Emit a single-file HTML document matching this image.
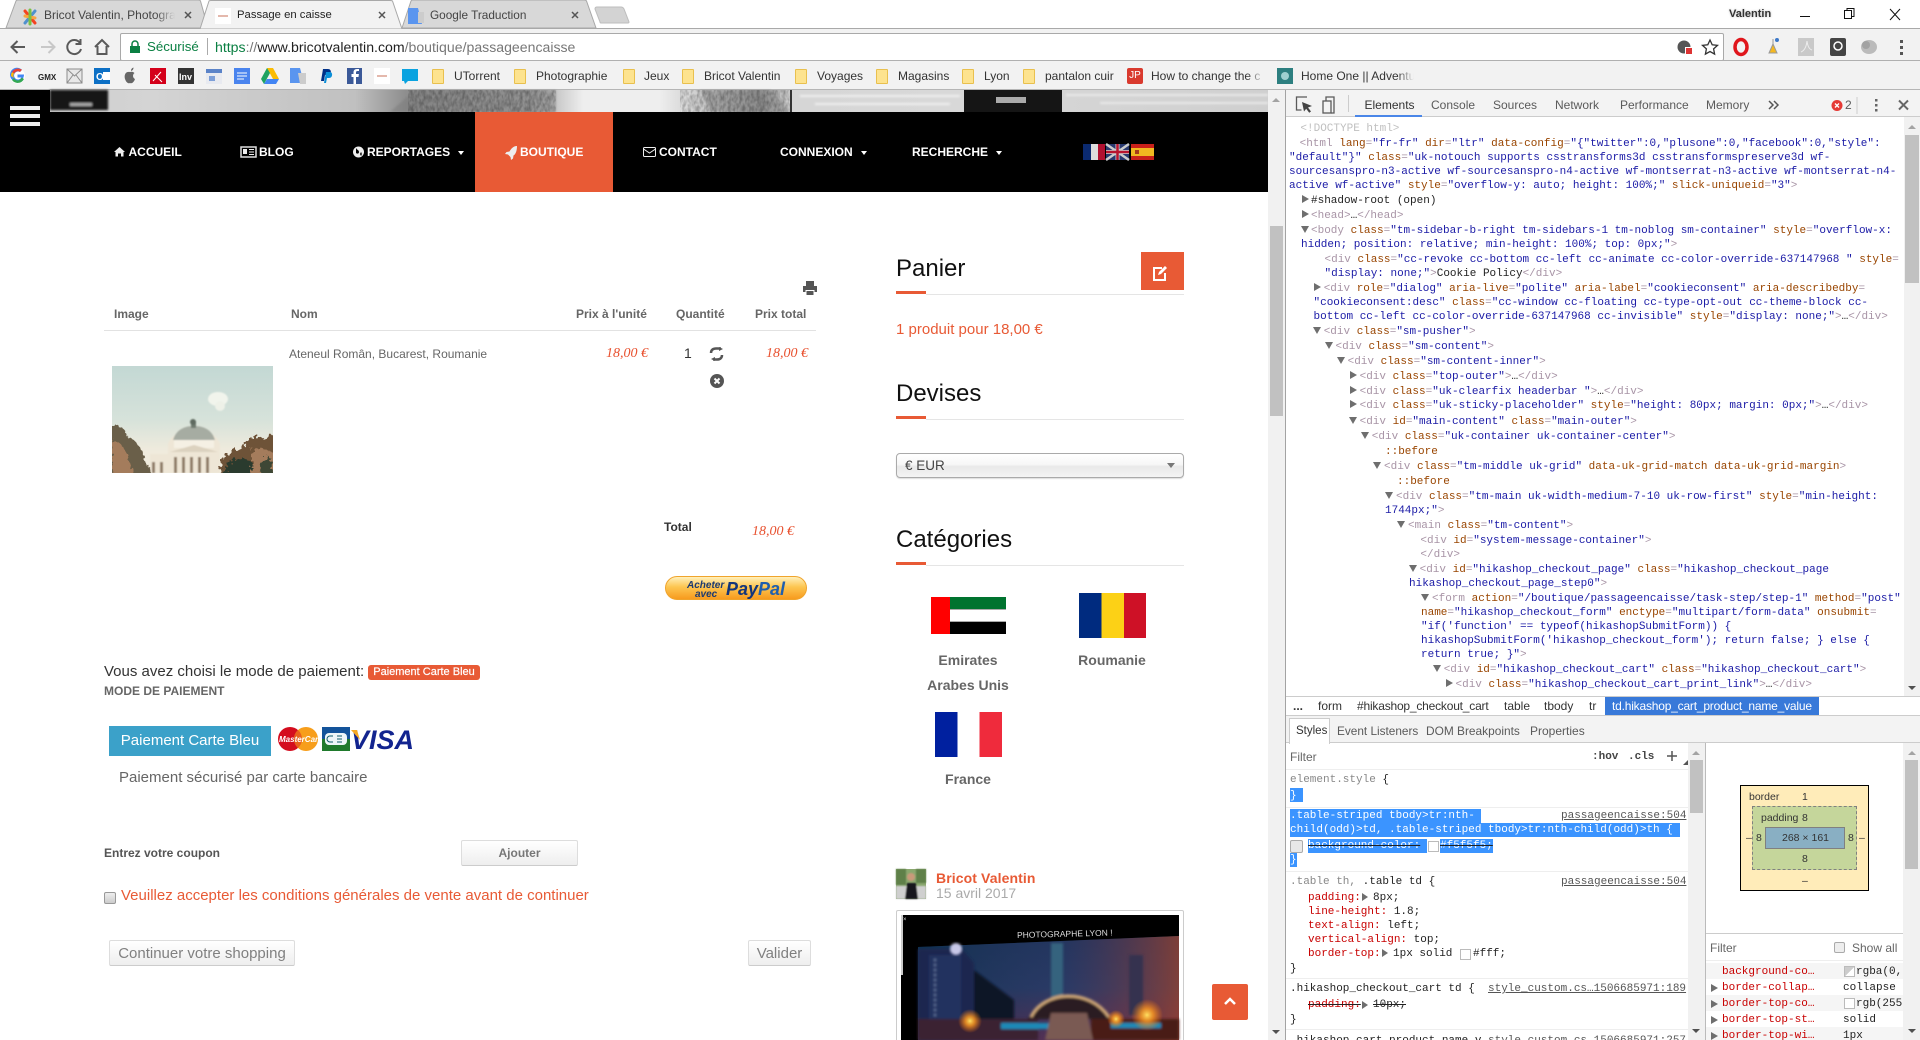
<!DOCTYPE html>
<html lang="fr"><head><meta charset="utf-8"><title>Passage en caisse</title>
<style>
html,body{margin:0;padding:0;width:1920px;height:1040px;overflow:hidden;background:#fff}
body{position:relative;font-family:"Liberation Sans",sans-serif;font-size:12px;color:#333}
.t{position:absolute;white-space:nowrap;line-height:20px}
.b{position:absolute}
svg{position:absolute;overflow:visible}
.fo{position:absolute;top:69px;width:10px;height:13px;background:#fde38f;border:1px solid #e9c04e;border-radius:1px}
.nv{font-weight:bold;color:#fff;font-size:12px;top:142px}
.bm{top:66px;font-size:12px;color:#333}
.car{position:absolute;top:151px;width:0;height:0;border-left:3.5px solid transparent;border-right:3.5px solid transparent;border-top:4px solid #fff}
.h3{font-size:24px;color:#111}
.ul{position:absolute;left:896px;width:30px;height:3px;background:#e85a35}
.gl{position:absolute;left:926px;width:258px;height:1px;background:#e5e5e5}
.th{font-weight:bold;color:#666;font-size:12px;top:304px}
.pr{font-family:"Liberation Serif",serif;font-style:italic;font-size:14px;color:#e8502e}
.btn{position:absolute;box-sizing:border-box;border:1px solid #ddd;border-bottom-color:#ccc;border-radius:2px;background:linear-gradient(#fff,#eee);text-align:center;line-height:24px}
.d{position:absolute;white-space:nowrap;font-family:"Liberation Mono",monospace;font-size:11px;line-height:14px;color:#222;margin-top:1px}
.d i{font-style:normal;color:#a894a6}.d b{font-weight:normal;color:#994500}.d u{text-decoration:none;color:#1a1aa6}
.ar{position:absolute;width:0;height:0;border-top:4.5px solid transparent;border-bottom:4.5px solid transparent;border-left:7px solid #6e6e6e}
.ad{position:absolute;width:0;height:0;border-left:4.5px solid transparent;border-right:4.5px solid transparent;border-top:7px solid #6e6e6e}
.dv{font-size:12px;color:#5a5a5a;top:95px}
.r{color:#c80000}.l{text-decoration:underline;color:#555}
.sw{position:absolute;width:9px;height:9px;border:1px solid #bbb;background:#fff}
.ln{position:absolute;height:1px;background:#eee}
.bx{font-size:10.500px;color:#333}
.sb{position:absolute;background:#f1f1f1}
.tu{position:absolute;width:0;height:0;border-left:4px solid transparent;border-right:4px solid transparent;border-bottom:4px solid #a3a3a3}
.td{position:absolute;width:0;height:0;border-left:4px solid transparent;border-right:4px solid transparent;border-top:4px solid #505050}
</style></head><body>

<!-- ===== browser chrome ===== -->
<div class="b" style="left:0;top:0;width:1920px;height:29px;background:#fff"></div>
<div class="b" style="left:0;top:28px;width:1920px;height:1px;background:#a9a9a9"></div>
<svg style="left:0;top:0" width="640" height="30">
<path d="M6 28 L16 1 Q16.500 0 18 0 L198 0 Q200 0 200.500 1 L208 28Z" fill="#d8d8d8" stroke="#a8a8a8"/>
<path d="M402 28 L411 1 Q411.500 0 413 0 L584 0 Q586 0 586.500 1 L596 28Z" fill="#d8d8d8" stroke="#a8a8a8"/>
<path d="M200 29 L209 1 Q209.500 0.500 211 0.500 L390 0.500 Q392 0.500 392.500 1 L402 29Z" fill="#f2f2f2" stroke="#a8a8a8"/>
<path d="M595 9 Q595 7 597 7 L621 7 Q623 7 624 9 L629 22 Q629 23 628 23 L601 23 Q600 23 600 22Z" fill="#d3d3d3" stroke="#bdbdbd"/>
<g stroke-width="3" fill="none" stroke-linecap="round"><path d="M25 11 L35 23" stroke="#f44321"/><path d="M35 11 L25 23" stroke="#5091cd"/><path d="M25 16 L35 18" stroke="#f9a541"/><path d="M30 10 L30 24" stroke="#7ac143"/></g>
<rect x="215" y="8" width="16" height="16" fill="#fff"/><path d="M218 16h10" stroke="#c9705a"/>
<path d="M408 8 h10 l4 16 h-14z" fill="#5a95ef"/><path d="M418 12 h6 v11 h-6z" fill="#ccc"/>
<g stroke="#555" stroke-width="1.500"><path d="M185 12 l6 6 M191 12 l-6 6"/><path d="M379 12 l6 6 M385 12 l-6 6"/><path d="M572 12 l6 6 M578 12 l-6 6"/></g>
</svg>
<div class="t" style="left:44px;top:5px;width:131px;overflow:hidden;color:#444;-webkit-mask-image:linear-gradient(90deg,#000 85%,transparent)">Bricot Valentin, Photogra</div>
<div class="t" style="left:237px;top:5px;color:#222;font-size:11.300px">Passage en caisse</div>
<div class="t" style="left:430px;top:5px;color:#444;font-size:11.800px">Google Traduction</div>
<div class="t" style="left:1729px;top:4px;font-size:11px;font-weight:bold;color:#333;text-shadow:0 0 2px #bbb">Valentin</div>
<svg style="left:1795px;top:4px" width="115" height="20" fill="none" stroke="#111"><path d="M5 12.500h10"/><rect x="49.500" y="6.500" width="7" height="8" fill="#fff"/><path d="M52 6.500V4.500h7v8h-2.500"/><path d="M95 5 L105 16 M105 5 L95 16"/></svg>
<!-- toolbar -->
<div class="b" style="left:0;top:29px;width:1920px;height:32px;background:#f2f2f2"></div>
<div class="b" style="left:120px;top:33px;width:1602px;height:26px;border:1px solid #a9a9a9;border-radius:2px;background:#fff"></div>
<svg style="left:0;top:29px" width="130" height="32" fill="none" stroke-width="2">
<path d="M25 18H12 M17.500 12L11.500 18L17.500 24" stroke="#5a5a5a"/>
<path d="M41 18H54 M48.500 12L54.500 18L48.500 24" stroke="#c8c8c8"/>
<path d="M80 14A7 7 0 1 0 81 20 M80.500 10v5h-5" stroke="#5a5a5a"/>
<path d="M95 18l7-7 7 7M97.500 17v8h9v-8" stroke="#5a5a5a"/>
</svg>
<svg style="left:129px;top:40px" width="12" height="14"><path d="M3 6V4a3 3 0 0 1 6 0v2" fill="none" stroke="#0b8043" stroke-width="1.500"/><rect x="1" y="6" width="10" height="7" fill="#0b8043"/></svg>
<div class="t" style="left:147px;top:37px;font-size:13.300px;color:#0b8043">Sécurisé</div>
<div class="b" style="left:207px;top:38px;width:1px;height:17px;background:#aaa"></div>
<div class="t" style="left:215px;top:37px;font-size:14.100px;color:#777"><span style="color:#0b8043">https</span>://<span style="color:#222">www.bricotvalentin.com</span>/boutique/passageencaisse</div>
<svg style="left:1675px;top:36px" width="235" height="24">
<circle cx="9" cy="11" r="6.500" fill="#555"/><rect x="10" y="11" width="8" height="8" fill="#fff"/><rect x="11" y="12" width="6" height="6" fill="#d33"/>
<path d="M35 4l2.200 4.800 5.300.6-3.900 3.500 1 5.200-4.600-2.600-4.600 2.600 1-5.200-3.900-3.500 5.300-.6z" fill="none" stroke="#333" stroke-width="1.300"/>
<ellipse cx="66" cy="11" rx="6" ry="7.500" fill="none" stroke="#e0161c" stroke-width="3.500"/>
<path d="M98 3 v5 l-4 9 h8 l-4-9" fill="#f5b81f" stroke="#999"/><circle cx="102" cy="4" r="2" fill="#3c78c8"/>
<rect x="123" y="2" width="16" height="18" fill="#c9c9c9"/><path d="M126 16 q5-2 6-11 q1 8 5 9" stroke="#eee" fill="none"/>
<rect x="155" y="2" width="16" height="18" rx="2" fill="#444"/><circle cx="163" cy="10" r="4" fill="none" stroke="#fff" stroke-width="1.500"/>
<ellipse cx="194" cy="11" rx="8" ry="7" fill="#bbb"/><circle cx="191" cy="9" r="4" fill="#a2a2a2"/>
<g fill="#555"><rect x="225" y="4" width="3" height="3"/><rect x="225" y="10" width="3" height="3"/><rect x="225" y="16" width="3" height="3"/></g>
</svg>
<!-- bookmarks -->
<div class="b" style="left:0;top:60px;width:1920px;height:1px;background:#b0b0b0"></div>
<div class="b" style="left:0;top:61px;width:1920px;height:29px;background:#f2f2f2"></div>
<div class="b" style="left:0;top:89px;width:1920px;height:1px;background:#b5b5b5"></div>
<svg style="left:0;top:66px" width="420" height="20">
<circle cx="17.500" cy="10" r="7.500" fill="#fff"/><path d="M24 8.500H17.500v3H21.500A4 4 0 1 1 20 6L22 3.800A7 7 0 1 0 24 8.500Z" fill="#4285f4"/><path d="M12 6A7 7 0 0 1 22 3.800L20 6A4 4 0 0 0 14 7.800Z" fill="#ea4335"/><path d="M11 10A7 7 0 0 1 12 6L14 7.800A4 4 0 0 0 14 12Z" fill="#fbbc05"/><path d="M12 14L14 12A4 4 0 0 0 21.500 11.500L24 13A7 7 0 0 1 12 14Z" fill="#34a853"/>
<text x="38" y="14" font-family="Liberation Sans" font-size="8" font-weight="bold" fill="#222">GMX</text>
<rect x="67" y="3" width="15" height="14" fill="#e8e8e8" stroke="#8c8c8c"/><path d="M67 3l7.500 7L82 3M67 17l6-8M82 17l-6-8" stroke="#8c8c8c" fill="none"/>
<rect x="94" y="2" width="16" height="16" fill="#0d70c5"/><rect x="103" y="6" width="7" height="8" fill="#fff"/><text x="96" y="14" font-family="Liberation Sans" font-size="10" font-weight="bold" fill="#fff">O</text>
<path d="M130 6c-5-1-6 4-5 7 1 3 3 5 5 4 2 1 4-1 5-4-2-1-3-4-.5-6-1.500-1.500-3-1.500-4.500-1zM131 5c0-2 1-3 2.500-3.500 0 2-1 3-2.500 3.500z" fill="#666"/>
<rect x="150" y="2" width="16" height="16" fill="#d4001a"/><path d="M153 15l8-9M155 9l7 7" stroke="#fff" fill="none"/>
<rect x="178" y="2" width="16" height="16" fill="#333"/><text x="179" y="14" font-family="Liberation Sans" font-size="9" font-weight="bold" fill="#fff">Inv</text>
<rect x="206" y="3" width="16" height="15" fill="#e8eaf0"/><rect x="206" y="3" width="16" height="4" fill="#5b83c8"/><rect x="209" y="10" width="6" height="5" fill="#7d9fd8"/>
<path d="M234 2h16v16h-16z" fill="#4a84ee"/><path d="M237 7h10M237 10h10M237 13h7" stroke="#fff"/>
<path d="M267 2h6l6 11h-6z" fill="#fbbc05"/><path d="M267 2l-6 11 3 5 6-11z" fill="#1ea362"/><path d="M264 18h12l3-5h-12z" fill="#4285f4"/>
<path d="M290 2h10l4 15h-14z" fill="#5a95ef"/><path d="M298 7h8v11h-6z" fill="#ccc"/>
<path d="M323 3h5c4 0 4 6-1 6h-2l-1 6h-3z" fill="#003087"/><path d="M326 6h4c3 0 3 6-1 6h-2l-1 5h-2z" fill="#0a8fd8"/>
<rect x="347" y="2" width="15" height="16" fill="#3b5998"/><path d="M356 18v-7h2.500l.4-3H356V6.500c0-1 .5-1.500 1.500-1.500h1.500V3h-2c-2.500 0-3.500 1.500-3.500 3.500V8h-2v3h2v7z" fill="#fff"/>
<rect x="374" y="2" width="16" height="16" fill="#fff"/><path d="M377 10h10" stroke="#c9705a"/>
<path d="M402 3h16v12H408l-3 3-1-3h-2z" fill="#0aa3e0"/>
</svg>
<div class="fo" style="left:432px"></div><div class="t bm" style="left:454px">UTorrent</div>
<div class="fo" style="left:514px"></div><div class="t bm" style="left:536px">Photographie</div>
<div class="fo" style="left:623px"></div><div class="t bm" style="left:644px">Jeux</div>
<div class="fo" style="left:682px"></div><div class="t bm" style="left:704px">Bricot Valentin</div>
<div class="fo" style="left:795px"></div><div class="t bm" style="left:817px">Voyages</div>
<div class="fo" style="left:876px"></div><div class="t bm" style="left:898px">Magasins</div>
<div class="fo" style="left:962px"></div><div class="t bm" style="left:984px">Lyon</div>
<div class="fo" style="left:1023px"></div><div class="t bm" style="left:1045px">pantalon cuir</div>
<div class="b" style="left:1127px;top:68px;width:16px;height:16px;background:#d93a2e;border-radius:2px;color:#fff;font-size:10px;line-height:16px;text-align:center">JP</div>
<div class="t bm" style="left:1151px;width:113px;overflow:hidden;-webkit-mask-image:linear-gradient(90deg,#000 85%,transparent)">How to change the c</div>
<div class="b" style="left:1277px;top:68px;width:16px;height:16px;background:#2d7f80"></div><div class="b" style="left:1281px;top:72px;width:8px;height:8px;border-radius:50%;background:#9fd0d0"></div>
<div class="t bm" style="left:1301px;width:113px;overflow:hidden;-webkit-mask-image:linear-gradient(90deg,#000 85%,transparent)">Home One || Adventu</div>

<!-- ===== page ===== -->
<svg style="left:0;top:90px" width="1268" height="22">
<defs><linearGradient id="hg" gradientUnits="userSpaceOnUse" x1="0" x2="1268" y1="0" y2="0"><stop offset="0" stop-color="#ccc"/><stop offset=".12" stop-color="#d4d4d4"/><stop offset=".28" stop-color="#c0c0c0"/><stop offset=".32" stop-color="#8e8e8e"/><stop offset=".42" stop-color="#a8a8a8"/><stop offset=".46" stop-color="#eee"/><stop offset=".52" stop-color="#eee"/><stop offset=".6" stop-color="#999"/><stop offset=".625" stop-color="#d6d6d6"/><stop offset=".76" stop-color="#d8d8d8"/><stop offset="1" stop-color="#cfcfcf"/></linearGradient>
<filter id="bl"><feGaussianBlur stdDeviation="1"/></filter>
<filter id="ns" x="0" y="0" width="1" height="1"><feTurbulence type="fractalNoise" baseFrequency=".35 .18" numOctaves="2" seed="4"/><feColorMatrix values="0 0 0 0 0 0 0 0 0 0 0 0 0 0 0 1.800 0 0 0 -.55"/></filter></defs>
<rect width="1268" height="22" fill="url(#hg)"/>
<g filter="url(#bl)">
<path d="M50 0H108V20H50Z" fill="#191919"/><path d="M70 13h22v3H70z" fill="#aaa"/>
<path d="M390 22 L408 6 L420 0 H556 V22Z" fill="#767676" opacity=".45"/>
<path d="M700 0 L770 0 L790 22 L710 22Z" fill="#777" opacity=".4"/>
<path d="M1066 5H1268M1100 13H1268" stroke="#eaeaea" stroke-width="2"/>
<path d="M800 6H960M815 14H950" stroke="#f0f0f0" stroke-width="2"/>
</g>
<rect x="408" y="0" width="148" height="22" filter="url(#ns)" opacity=".3"/>
<rect x="680" y="0" width="110" height="22" filter="url(#ns)" opacity=".3"/>
<rect x="790" y="0" width="2" height="22" fill="#333"/>
<rect x="964" y="0" width="98" height="22" fill="#151515"/><rect x="996" y="7" width="30" height="6" fill="#aaa"/>
</svg>
<div class="b" style="left:0;top:90px;width:50px;height:22px;background:#000"></div>
<div class="b" style="left:0;top:112px;width:1268px;height:80px;background:#000"></div>
<div class="b" style="left:10px;top:106px;width:30px;height:4px;background:#eee"></div>
<div class="b" style="left:10px;top:114px;width:30px;height:4px;background:#eee"></div>
<div class="b" style="left:10px;top:122px;width:30px;height:4px;background:#eee"></div>
<div class="b" style="left:475px;top:112px;width:138px;height:80px;background:#e85a35"></div>
<svg style="left:0;top:142px" width="1268" height="20" fill="#eee">
<path d="M114 10l5.500-5 5.500 5h-1.500v4.500h-2.500v-3h-3v3h-2.500V10z"/>
<path d="M241 5h15v10h-15z" fill="none" stroke="#ddd" stroke-width="1.500"/><path d="M243 7h4v5h-4zM249 7h5v1h-5zM249 9.500h5v1h-5zM249 12h5v1h-5z"/>
<circle cx="358.500" cy="10" r="5.500"/><path d="M356 6c1 2 3 2 3 4s-2 2-3 1zM361 10c1 1 1 3 0 4l-1-2z" fill="#000"/>
<path d="M517 4c-4 0-6 3-7.500 5.500L506.500 10l-1.500 2 3 .5 2.500 2.500.5 3 2-1.500.5-3C516 12 517 8 517 4z"/>
<rect x="643.500" y="5.500" width="12" height="9" rx="1" fill="none" stroke="#eee"/><path d="M643.500 7l6 4 6-4" fill="none" stroke="#eee"/>
</svg>
<div class="t nv" style="left:128.500px">ACCUEIL</div>
<div class="t nv" style="left:259px">BLOG</div>
<div class="t nv" style="left:367px">REPORTAGES</div><div class="car" style="left:458px"></div>
<div class="t nv" style="left:520px">BOUTIQUE</div>
<div class="t nv" style="left:659px">CONTACT</div>
<div class="t nv" style="left:780px">CONNEXION</div><div class="car" style="left:861px"></div>
<div class="t nv" style="left:912px">RECHERCHE</div><div class="car" style="left:996px"></div>
<svg style="left:1083px;top:144px" width="71" height="17">
<rect x="0" width="8" height="16" fill="#0b2a70"/><rect x="8" width="7" height="16" fill="#ddd"/><rect x="15" width="7" height="16" fill="#b01030"/>
<rect x="23" width="23" height="16" fill="#28386e"/><path d="M23 0l23 16M46 0L23 16" stroke="#ccc" stroke-width="2.500"/><path d="M34.500 0v16M23 8h23" stroke="#ccc" stroke-width="4"/><path d="M34.500 0v16M23 8h23" stroke="#b8142e" stroke-width="2.500"/>
<rect x="48" width="23" height="16" fill="#c8201a"/><rect x="48" y="4" width="23" height="8" fill="#f0b820"/><rect x="52" y="6" width="4" height="4" fill="#a53a1a"/>
</svg>

<!-- cart -->
<svg style="left:803px;top:281px" width="14" height="14" fill="#555"><path d="M3 0h8v5H3z"/><path d="M0 5h14v6h-2.500V9h-9v2H0z"/><path d="M3.500 10h7v4h-7z"/></svg>
<div class="t th" style="left:114px">Image</div>
<div class="t th" style="left:291px">Nom</div>
<div class="t th" style="left:576px">Prix à l'unité</div>
<div class="t th" style="left:676px">Quantité</div>
<div class="t th" style="left:755px">Prix total</div>
<div class="b" style="left:104px;top:330px;width:712px;height:1px;background:#e2e2e2"></div>
<div class="t" style="left:289px;top:344px;color:#666">Ateneul Român, Bucarest, Roumanie</div>
<div class="t pr" style="left:606px;top:344px">18,00 €</div>
<div class="t" style="left:684px;top:343px;font-size:14px;color:#333">1</div>
<svg style="left:710px;top:347px" width="14" height="14" fill="none" stroke="#555" stroke-width="2.500"><path d="M1 6C1 3 3 1.500 6 1.500h5M12 8c0 3-2 4.500-5 4.500H3"/><path d="M9 0l4 2-4 2zM5 10L1 12l4 2z" fill="#555" stroke="none"/></svg>
<svg style="left:710px;top:374px" width="14" height="14"><circle cx="7" cy="7" r="7" fill="#555"/><path d="M4.500 4.500l5 5M9.500 4.500l-5 5" stroke="#fff" stroke-width="2"/></svg>
<div class="t pr" style="left:766px;top:344px">18,00 €</div>
<svg style="left:112px;top:366px" width="161" height="107">
<defs><linearGradient id="sky" x1="0" x2="0" y1="0" y2="1"><stop offset="0" stop-color="#c3d8d4"/><stop offset=".5" stop-color="#d6e2da"/><stop offset=".8" stop-color="#f0ebdd"/></linearGradient><filter id="b1"><feGaussianBlur stdDeviation=".8"/></filter>
<filter id="tree" x="-10%" y="-10%" width="120%" height="120%"><feTurbulence type="fractalNoise" baseFrequency=".25" numOctaves="2" seed="7" result="n"/><feDisplacementMap in="SourceGraphic" in2="n" scale="9"/></filter>
<clipPath id="c1"><rect width="161" height="107"/></clipPath></defs>
<g clip-path="url(#c1)"><rect width="161" height="107" fill="url(#sky)"/>
<g filter="url(#b1)">
<ellipse cx="106" cy="33" rx="10" ry="7" fill="#f1f4ec"/><ellipse cx="108" cy="40" rx="5" ry="5" fill="#eef1e8"/>
<path d="M38 107V88H56V78C60 68 70 64 82 64S104 68 108 78V107Z" fill="#eee6d6"/>
<path d="M61 74C64 64 72 60 82 60S100 64 103 74Z" fill="#a6aca2"/>
<rect x="79" y="55" width="5" height="7" fill="#6f7a70"/><circle cx="81" cy="56" r="3" fill="#5f6a60"/>
<path d="M62 74h40v8H62z" fill="#f5f0e4"/>
<path d="M58 86 L82 79 L106 86Z" fill="#dcd2bf"/>
<g fill="#8f7c68"><rect x="62" y="91" width="3" height="16"/><rect x="70" y="91" width="3" height="16"/><rect x="78" y="91" width="3" height="16"/><rect x="86" y="91" width="3" height="16"/><rect x="94" y="91" width="3" height="16"/><rect x="40" y="96" width="3" height="11"/><rect x="48" y="96" width="3" height="11"/></g>
</g>
<g filter="url(#tree)">
<path d="M-5 60C6 56 14 62 16 72 24 72 30 84 34 96L42 112H-5Z" fill="#6b5f48"/>
<path d="M0 76C8 72 16 84 22 112H0Z" fill="#a47c5c"/>
<path d="M108 112C106 92 118 82 128 84 134 72 146 66 152 74 156 70 166 68 166 68V112Z" fill="#6e5238"/>
<path d="M110 112C114 96 126 88 138 94L146 112Z" fill="#2c3a2e"/>
<path d="M140 84c6-4 14 0 26 4v24h-26z" fill="#a47c5c"/>
<path d="M148 96l10-6 4 22h-12z" fill="#3c4634"/>
</g></g></svg>
<div class="t" style="left:664px;top:517px;font-weight:bold;color:#333">Total</div>
<div class="t pr" style="left:752px;top:522px">18,00 €</div>
<svg style="left:665px;top:576px" width="142" height="24">
<defs><linearGradient id="pp" x1="0" x2="0" y1="0" y2="1"><stop offset="0" stop-color="#fff2c0"/><stop offset=".45" stop-color="#fdc651"/><stop offset="1" stop-color="#f7991c"/></linearGradient></defs>
<rect x=".5" y=".5" width="141" height="23" rx="11.500" fill="url(#pp)" stroke="#f0a42c"/>
<text x="22" y="12" font-family="Liberation Sans" font-style="italic" font-weight="bold" font-size="10" fill="#1c3a70">Acheter</text>
<text x="30" y="21" font-family="Liberation Sans" font-style="italic" font-weight="bold" font-size="10" fill="#1c3a70">avec</text>
<text x="61" y="19" font-family="Liberation Sans" font-style="italic" font-weight="bold" font-size="18" fill="#12357b">Pay<tspan fill="#1f5fae">Pal</tspan></text>
</svg>

<!-- payment -->
<div class="t" style="left:104px;top:662px;font-size:15px;color:#333">Vous avez choisi le mode de paiement:</div>
<div class="b" style="left:368px;top:665px;width:112px;height:15px;border-radius:3px;background:#e85a35;color:#fff;font-size:11px;font-weight:normal;line-height:15px;text-align:center;-webkit-text-stroke:.2px #fff">Paiement Carte Bleu</div>
<div class="t" style="left:104px;top:681px;font-weight:bold;color:#666">MODE DE PAIEMENT</div>
<div class="b" style="left:109px;top:726px;width:162px;height:30px;background:#3ba1c9;color:#fff;font-size:15px;line-height:30px;text-align:center">Paiement Carte Bleu</div>
<svg style="left:278px;top:727px" width="136" height="24">
<circle cx="12" cy="12" r="12" fill="#d40c1e"/><circle cx="28" cy="12" r="12" fill="#f79e1b"/><path d="M20 3a12 12 0 0 1 0 18 12 12 0 0 1 0-18z" fill="#e8611c"/>
<text x="1" y="15" font-family="Liberation Sans" font-style="italic" font-weight="bold" font-size="8" fill="#fff">MasterCard</text>
<rect x="44" width="28" height="12" fill="#13539a"/><rect x="44" y="12" width="28" height="12" fill="#1f7a2c"/>
<rect x="47" y="6" width="22" height="12" rx="4" fill="#eef6f8"/><path d="M55 9h-3a3 3 0 0 0 0 6h3M59 9h5M59 12h5M59 15h5" stroke="#0f5a6a" fill="none"/>
<text x="73" y="22" font-family="Liberation Sans" font-style="italic" font-weight="bold" font-size="27" fill="#12248f" textLength="63" lengthAdjust="spacingAndGlyphs">VISA</text>
<path d="M73 3l6 0 3 10z" fill="#f7a823"/>
</svg>
<div class="t" style="left:119px;top:768px;font-size:15px;color:#666">Paiement sécurisé par carte bancaire</div>
<div class="t" style="left:104px;top:843px;font-weight:bold;color:#555">Entrez votre coupon</div>
<div class="btn" style="left:461px;top:840px;width:117px;height:26px;font-weight:bold;color:#777">Ajouter</div>
<div class="b" style="left:104px;top:892px;width:10px;height:10px;border:1px solid #999;border-radius:2px;background:linear-gradient(#eee,#ccc)"></div>
<div class="t" style="left:121px;top:886px;font-size:15px;color:#e85a35">Veuillez accepter les conditions générales de vente avant de continuer</div>
<div class="btn" style="left:109px;top:940px;width:186px;height:26px;font-size:15px;color:#808080;line-height:26px">Continuer votre shopping</div>
<div class="btn" style="left:748px;top:940px;width:63px;height:26px;font-size:15px;color:#808080;line-height:26px">Valider</div>

<!-- sidebar -->
<div class="t h3" style="left:896px;top:259px">Panier</div>
<div class="b" style="left:1141px;top:252px;width:43px;height:38px;background:#e85a35"></div>
<svg style="left:1152px;top:265px" width="17" height="16" fill="none" stroke="#fff" stroke-width="2"><path d="M10 3H2v12h11V8"/><path d="M6 10l1-3 6-6 2 2-6 6z" fill="#fff" stroke="none"/></svg>
<div class="ul" style="top:291px"></div><div class="gl" style="top:294px"></div>
<div class="t" style="left:896px;top:320px;font-size:15px;color:#e85a35">1 produit pour 18,00 €</div>
<div class="t h3" style="left:896px;top:384px">Devises</div>
<div class="ul" style="top:416px"></div><div class="gl" style="top:419px"></div>
<div class="b" style="left:896px;top:453px;width:286px;height:23px;border:1px solid #aaa;border-radius:4px;box-shadow:0 1px 1px #ddd;background:linear-gradient(#fff 0,#f7f7f7 45%,#e9e9e9 55%,#f4f4f4 100%)"></div>
<div class="t" style="left:905px;top:456px;font-size:13.500px;color:#444">€ EUR</div>
<div class="b" style="left:1167px;top:463px;border-left:4px solid transparent;border-right:4px solid transparent;border-top:5px solid #777"></div>
<div class="t h3" style="left:896px;top:530px">Catégories</div>
<div class="ul" style="top:562px"></div><div class="gl" style="top:565px"></div>
<svg style="left:931px;top:593px" width="215" height="45">
<rect x="0" y="4" width="19" height="37" fill="#ff0000"/><rect x="19" y="4" width="56" height="12" fill="#00732f"/><rect x="19" y="16" width="56" height="13" fill="#fff"/><rect x="19" y="29" width="56" height="12" fill="#000"/><path d="M19 16.500h56M19 28.500h56" stroke="#aaa"/>
<rect x="148" width="22.500" height="45" fill="#002b7f"/><rect x="170.500" width="22.500" height="45" fill="#fcd116"/><rect x="193" width="22" height="45" fill="#ce1126"/>
</svg>
<div class="t" style="left:868px;top:650px;width:200px;text-align:center;font-size:14px;font-weight:bold;color:#666">Emirates</div>
<div class="t" style="left:868px;top:675px;width:200px;text-align:center;font-size:14px;font-weight:bold;color:#666">Arabes Unis</div>
<div class="t" style="left:1012px;top:650px;width:200px;text-align:center;font-size:14px;font-weight:bold;color:#666">Roumanie</div>
<svg style="left:935px;top:712px" width="67" height="45"><rect width="22.500" height="45" fill="#00209f"/><rect x="22.500" width="22" height="45" fill="#fff"/><rect x="44.500" width="22.500" height="45" fill="#ef2b3c"/></svg>
<div class="t" style="left:868px;top:769px;width:200px;text-align:center;font-size:14px;font-weight:bold;color:#666">France</div>
<svg style="left:896px;top:869px" width="30" height="30">
<defs><filter id="b2"><feGaussianBlur stdDeviation=".8"/></filter></defs>
<rect width="30" height="30" fill="#8aa76e"/><g filter="url(#b2)"><rect y="17" width="30" height="13" fill="#cfcfcf"/><path d="M0 0h10v16H0zM20 0h10v14H20z" fill="#5f8048"/><path d="M11 14h9l2 16H9z" fill="#15181c"/><circle cx="15" cy="8" r="4" fill="#c99a7a"/></g></svg>
<div class="t" style="left:936px;top:868px;font-size:14px;font-weight:bold;color:#e85a35;letter-spacing:.1px">Bricot Valentin</div>
<div class="t" style="left:936px;top:883px;font-size:14px;color:#aaa">15 avril 2017</div>
<div class="b" style="left:896px;top:910px;width:286px;height:140px;border:1px solid #ccc;border-radius:2px"></div>
<svg style="left:901px;top:915px" width="278" height="125">
<defs><linearGradient id="cs" x1="0" x2="0" y1="0" y2="1"><stop offset="0" stop-color="#123a5e"/><stop offset=".5" stop-color="#1c4168"/><stop offset="1" stop-color="#5a3350"/></linearGradient>
<linearGradient id="cs2" x1="0" x2="1" y1="0" y2="0"><stop offset="0" stop-color="#0d2740" stop-opacity=".5"/><stop offset=".55" stop-color="#4a2a60" stop-opacity=".3"/><stop offset="1" stop-color="#a0402c" stop-opacity=".75"/></linearGradient>
<filter id="b3"><feGaussianBlur stdDeviation="1.200"/></filter><radialGradient id="gl1"><stop offset="0" stop-color="#ffdf60"/><stop offset=".4" stop-color="#ff9a20" stop-opacity=".8"/><stop offset="1" stop-color="#ff7a10" stop-opacity="0"/></radialGradient></defs>
<rect width="278" height="125" fill="#000"/>
<path d="M17 32 L278 21 V125 H17 Z" fill="url(#cs)"/><path d="M17 32 L278 21 V125 H17 Z" fill="url(#cs2)"/>
<g filter="url(#b3)">
<path d="M17 34h44l12 14v77H17z" fill="#1a2650"/>
<path d="M28 40h32v80H28z" fill="#22305e"/><path d="M34 44v70" stroke="#6c80a8" stroke-width="2" stroke-dasharray="2 3"/>
<path d="M73 55 l40 30 v40 h-40z" fill="#0b1326"/>
<rect x="150" y="28" width="12" height="70" fill="#35647e"/>
<rect x="228" y="40" width="14" height="60" fill="#35304f"/>
<path d="M127 104 C140 74 190 70 210 104Z" fill="#2a1e24"/><path d="M130 102 C142 76 188 72 208 102" fill="none" stroke="#d0a878" stroke-width="3"/>
<path d="M17 104h120v21H17z" fill="#3b2030"/><path d="M190 104h88v21h-88z" fill="#4a1a18"/>
<path d="M100 108h60v6h-60z" fill="#1d8ab8"/><path d="M210 108h50v5h-50z" fill="#1d8ab8"/>
<path d="M150 98h36l6 27h-48z" fill="#7a5a52"/>
</g>
<circle cx="246" cy="100" r="16" fill="url(#gl1)"/><circle cx="69" cy="106" r="12" fill="url(#gl1)"/><circle cx="215" cy="104" r="9" fill="url(#gl1)"/><circle cx="55" cy="34" r="6" fill="#c8c8e8" filter="url(#b3)"/>
<rect x="0" y="0" width="2" height="60" fill="#ccc"/><text x="2" y="6" font-size="6" font-family="Liberation Sans" fill="#ddd">×</text>
</svg>
<div class="t" style="left:1017px;top:925px;font-size:8.500px;color:#ddd;transform:rotate(-1.500deg);transform-origin:0 50%">PHOTOGRAPHE LYON !</div>
<div class="b" style="left:1212px;top:984px;width:36px;height:36px;background:#e85a35;border-radius:2px"></div>
<svg style="left:1224px;top:997px" width="12" height="8" fill="none" stroke="#fff" stroke-width="2.500"><path d="M1 7l5-5 5 5"/></svg>
<!-- page scrollbar -->
<div class="sb" style="left:1268px;top:90px;width:17px;height:950px"></div>
<div class="tu" style="left:1272px;top:98px"></div>
<div class="b" style="left:1270px;top:226px;width:13px;height:190px;background:#c1c1c1"></div>
<div class="td" style="left:1272px;top:1030px"></div>

<!-- ===== devtools ===== -->
<div class="b" style="left:1285px;top:90px;width:635px;height:950px;background:#fff"></div>
<div class="b" style="left:1285px;top:90px;width:1px;height:950px;background:#a3a3a3"></div>
<div class="b" style="left:1286px;top:90px;width:634px;height:27px;background:#f3f3f3;border-bottom:1px solid #ccc;box-sizing:border-box"></div>
<svg style="left:1295px;top:95px" width="50" height="20" fill="none" stroke="#5a5a5a" stroke-width="1.300"><path d="M12 2H1.500v13h5"/><path d="M7 7l10 4-4 1.500 3 4-1.800 1.200-3-4L9 16.500z" fill="#444" stroke="none"/><rect x="28" y="6" width="8" height="12"/><path d="M31 6V2h8v16h-3"/></svg>
<div class="b" style="left:1348px;top:95px;width:1px;height:17px;background:#ccc"></div>
<div class="t dv" style="left:1364.500px;color:#333">Elements</div>
<div class="t dv" style="left:1431px">Console</div>
<div class="t dv" style="left:1493px">Sources</div>
<div class="t dv" style="left:1555px">Network</div>
<div class="t dv" style="left:1620px">Performance</div>
<div class="t dv" style="left:1706px">Memory</div>
<div class="b" style="left:1355px;top:115px;width:67px;height:2px;background:#4a86e8"></div>
<svg style="left:1768px;top:99px" width="140" height="14">
<path d="M1 2l4 4-4 4M6 2l4 4-4 4" fill="none" stroke="#555" stroke-width="1.500"/>
<circle cx="69" cy="6.500" r="5.500" fill="#e53935"/><path d="M67 4.500l4 4M71 4.500l-4 4" stroke="#fff" stroke-width="1.300"/>
<path d="M89 -2v17" stroke="#ccc"/>
<g fill="#666"><rect x="107" y="0" width="2.500" height="2.500"/><rect x="107" y="5" width="2.500" height="2.500"/><rect x="107" y="10" width="2.500" height="2.500"/></g>
<path d="M131 1.500l9 9M140 1.500l-9 9" stroke="#666" stroke-width="2"/>
</svg>
<div class="t dv" style="left:1845px">2</div>

<!-- DOM tree -->
<div class="d" style="left:1300.400px;top:121px;color:#c0c0c0">&lt;!DOCTYPE html&gt;</div>
<div class="d" style="left:1299.600px;top:136px"><i>&lt;html</i> <b>lang</b><i>=</i><u>"fr-fr"</u> <b>dir</b><i>=</i><u>"ltr"</u> <b>data-config</b><i>=</i><u>"{"twitter":0,"plusone":0,"facebook":0,"style":</u></div>
<div class="d" style="left:1289px;top:150px"><u>"default"}"</u> <b>class</b><i>=</i><u>"uk-notouch supports csstransforms3d csstransformspreserve3d wf-</u></div>
<div class="d" style="left:1289px;top:164px"><u>sourcesanspro-n3-active wf-sourcesanspro-n4-active wf-montserrat-n3-active wf-montserrat-n4-</u></div>
<div class="d" style="left:1289px;top:178px"><u>active wf-active"</u> <b>style</b><i>=</i><u>"overflow-y: auto; height: 100%;"</u> <b>slick-uniqueid</b><i>=</i><u>"3"</u><i>&gt;</i></div>
<div class="ar" style="left:1302px;top:195px"></div><div class="d" style="left:1311px;top:193px">#shadow-root (open)</div>
<div class="ar" style="left:1302px;top:210px"></div><div class="d" style="left:1311px;top:208px"><i>&lt;head&gt;</i>…<i>&lt;/head&gt;</i></div>
<div class="ad" style="left:1301px;top:226px"></div><div class="d" style="left:1311px;top:223px"><i>&lt;body</i> <b>class</b><i>=</i><u>"tm-sidebar-b-right tm-sidebars-1 tm-noblog sm-container"</u> <b>style</b><i>=</i><u>"overflow-x:</u></div>
<div class="d" style="left:1301px;top:237px"><u>hidden; position: relative; min-height: 100%; top: 0px;"</u><i>&gt;</i></div>
<div class="d" style="left:1324.500px;top:252px"><i>&lt;div</i> <b>class</b><i>=</i><u>"cc-revoke cc-bottom cc-left cc-animate cc-color-override-637147968 "</u> <b>style</b><i>=</i></div>
<div class="d" style="left:1324.500px;top:266px"><u>"display: none;"</u><i>&gt;</i>Cookie Policy<i>&lt;/div&gt;</i></div>
<div class="ar" style="left:1314px;top:283px"></div><div class="d" style="left:1323.700px;top:281px"><i>&lt;div</i> <b>role</b><i>=</i><u>"dialog"</u> <b>aria-live</b><i>=</i><u>"polite"</u> <b>aria-label</b><i>=</i><u>"cookieconsent"</u> <b>aria-describedby</b><i>=</i></div>
<div class="d" style="left:1313.500px;top:295px"><u>"cookieconsent:desc"</u> <b>class</b><i>=</i><u>"cc-window cc-floating cc-type-opt-out cc-theme-block cc-</u></div>
<div class="d" style="left:1313.500px;top:309px"><u>bottom cc-left cc-color-override-637147968 cc-invisible"</u> <b>style</b><i>=</i><u>"display: none;"</u><i>&gt;</i>…<i>&lt;/div&gt;</i></div>
<div class="ad" style="left:1313px;top:327px"></div><div class="d" style="left:1323.700px;top:324px"><i>&lt;div</i> <b>class</b><i>=</i><u>"sm-pusher"</u><i>&gt;</i></div>
<div class="ad" style="left:1325px;top:342px"></div><div class="d" style="left:1335.500px;top:339px"><i>&lt;div</i> <b>class</b><i>=</i><u>"sm-content"</u><i>&gt;</i></div>
<div class="ad" style="left:1337px;top:357px"></div><div class="d" style="left:1347.600px;top:354px"><i>&lt;div</i> <b>class</b><i>=</i><u>"sm-content-inner"</u><i>&gt;</i></div>
<div class="ar" style="left:1350px;top:371px"></div><div class="d" style="left:1359.600px;top:369px"><i>&lt;div</i> <b>class</b><i>=</i><u>"top-outer"</u><i>&gt;</i>…<i>&lt;/div&gt;</i></div>
<div class="ar" style="left:1350px;top:386px"></div><div class="d" style="left:1359.600px;top:384px"><i>&lt;div</i> <b>class</b><i>=</i><u>"uk-clearfix headerbar "</u><i>&gt;</i>…<i>&lt;/div&gt;</i></div>
<div class="ar" style="left:1350px;top:400px"></div><div class="d" style="left:1359.600px;top:398px"><i>&lt;div</i> <b>class</b><i>=</i><u>"uk-sticky-placeholder"</u> <b>style</b><i>=</i><u>"height: 80px; margin: 0px;"</u><i>&gt;</i>…<i>&lt;/div&gt;</i></div>
<div class="ad" style="left:1349px;top:417px"></div><div class="d" style="left:1359.600px;top:414px"><i>&lt;div</i> <b>id</b><i>=</i><u>"main-content"</u> <b>class</b><i>=</i><u>"main-outer"</u><i>&gt;</i></div>
<div class="ad" style="left:1361px;top:432px"></div><div class="d" style="left:1371.800px;top:429px"><i>&lt;div</i> <b>class</b><i>=</i><u>"uk-container uk-container-center"</u><i>&gt;</i></div>
<div class="d" style="left:1385px;top:444px;color:#994500">::before</div>
<div class="ad" style="left:1373px;top:462px"></div><div class="d" style="left:1384px;top:459px"><i>&lt;div</i> <b>class</b><i>=</i><u>"tm-middle uk-grid"</u> <b>data-uk-grid-match</b> <b>data-uk-grid-margin</b><i>&gt;</i></div>
<div class="d" style="left:1397px;top:474px;color:#994500">::before</div>
<div class="ad" style="left:1385px;top:492px"></div><div class="d" style="left:1396px;top:489px"><i>&lt;div</i> <b>class</b><i>=</i><u>"tm-main uk-width-medium-7-10 uk-row-first"</u> <b>style</b><i>=</i><u>"min-height:</u></div>
<div class="d" style="left:1385px;top:503px"><u>1744px;"</u><i>&gt;</i></div>
<div class="ad" style="left:1397px;top:521px"></div><div class="d" style="left:1408px;top:518px"><i>&lt;main</i> <b>class</b><i>=</i><u>"tm-content"</u><i>&gt;</i></div>
<div class="d" style="left:1420.400px;top:533px"><i>&lt;div</i> <b>id</b><i>=</i><u>"system-message-container"</u><i>&gt;</i></div>
<div class="d" style="left:1420.400px;top:547px"><i>&lt;/div&gt;</i></div>
<div class="ad" style="left:1409px;top:565px"></div><div class="d" style="left:1419.600px;top:562px"><i>&lt;div</i> <b>id</b><i>=</i><u>"hikashop_checkout_page"</u> <b>class</b><i>=</i><u>"hikashop_checkout_page</u></div>
<div class="d" style="left:1409px;top:576px"><u>hikashop_checkout_page_step0"</u><i>&gt;</i></div>
<div class="ad" style="left:1421px;top:594px"></div><div class="d" style="left:1432px;top:591px"><i>&lt;form</i> <b>action</b><i>=</i><u>"/boutique/passageencaisse/task-step/step-1"</u> <b>method</b><i>=</i><u>"post"</u></div>
<div class="d" style="left:1421px;top:605px"><b>name</b><i>=</i><u>"hikashop_checkout_form"</u> <b>enctype</b><i>=</i><u>"multipart/form-data"</u> <b>onsubmit</b><i>=</i></div>
<div class="d" style="left:1421px;top:619px"><u>"if('function' == typeof(hikashopSubmitForm)) {</u></div>
<div class="d" style="left:1421px;top:633px"><u>hikashopSubmitForm('hikashop_checkout_form'); return false; } else {</u></div>
<div class="d" style="left:1421px;top:647px"><u>return true; }"</u><i>&gt;</i></div>
<div class="ad" style="left:1433px;top:665px"></div><div class="d" style="left:1443.700px;top:662px"><i>&lt;div</i> <b>id</b><i>=</i><u>"hikashop_checkout_cart"</u> <b>class</b><i>=</i><u>"hikashop_checkout_cart"</u><i>&gt;</i></div>
<div class="ar" style="left:1446px;top:679px"></div><div class="d" style="left:1455.500px;top:677px"><i>&lt;div</i> <b>class</b><i>=</i><u>"hikashop_checkout_cart_print_link"</u><i>&gt;</i>…<i>&lt;/div&gt;</i></div>
<!-- DOM scrollbar -->
<div class="sb" style="left:1904px;top:117px;width:16px;height:579px"></div>
<div class="tu" style="left:1908px;top:125px"></div>
<div class="b" style="left:1905px;top:135px;width:14px;height:148px;background:#c1c1c1"></div>
<div class="td" style="left:1908px;top:686px"></div>
<!-- breadcrumbs -->
<div class="b" style="left:1286px;top:696px;width:634px;height:20px;border-top:1px solid #ccc;border-bottom:1px solid #ccc;box-sizing:border-box;background:#fff"></div>
<div class="t" style="left:1293px;top:696px;font-weight:bold;color:#333">...</div>
<div class="t" style="left:1318px;top:696px;color:#333">form</div>
<div class="t" style="left:1357px;top:696px;color:#333;letter-spacing:-.2px">#hikashop_checkout_cart</div>
<div class="t" style="left:1504px;top:696px;color:#333">table</div>
<div class="t" style="left:1544px;top:696px;color:#333">tbody</div>
<div class="t" style="left:1589px;top:696px;color:#333">tr</div>
<div class="b" style="left:1605px;top:697px;width:214px;height:18px;background:#3879d9"></div>
<div class="t" style="left:1612px;top:696px;color:#fff;letter-spacing:-.2px">td.hikashop_cart_product_name_value</div>
<!-- styles tabs -->
<div class="b" style="left:1286px;top:716px;width:634px;height:27px;background:#f3f3f3;border-bottom:1px solid #ccc;box-sizing:border-box"></div>
<div class="b" style="left:1289px;top:718px;width:41px;height:26px;background:#fff;border:1px solid #ccc;border-bottom:0;box-sizing:border-box"></div>
<div class="t" style="left:1296px;top:721px;color:#333;font-size:11.500px">Styles</div>
<div class="t" style="left:1337px;top:721px;color:#5a5a5a;font-size:11.800px">Event Listeners</div>
<div class="t" style="left:1426px;top:721px;color:#5a5a5a;font-size:11.900px">DOM Breakpoints</div>
<div class="t" style="left:1530px;top:721px;color:#5a5a5a">Properties</div>
<!-- styles pane -->
<div class="t" style="left:1290px;top:747px;color:#666">Filter</div>
<div class="d" style="left:1592px;top:749px;font-weight:bold;color:#444">:hov</div>
<div class="d" style="left:1628px;top:749px;font-weight:bold;color:#444">.cls</div>
<svg style="left:1667px;top:751px" width="20" height="18"><path d="M5 0v10M0 5h10" stroke="#555" stroke-width="1.500"/><path d="M21 9v5h-5z" fill="#555"/></svg>
<div class="ln" style="left:1286px;top:769px;width:402px"></div>
<div class="d" style="left:1290px;top:772px"><span style="color:#888">element.style</span> {</div>
<div class="b" style="left:1290px;top:788px;width:13px;height:14px;background:#3b94ff"></div>
<div class="d" style="left:1290px;top:788px;color:#fff">}</div>
<div class="ln" style="left:1286px;top:807px;width:402px"></div>
<div class="b" style="left:1290px;top:809px;width:191px;height:14px;background:#3b94ff"></div>
<div class="b" style="left:1290px;top:823px;width:390px;height:14px;background:#3b94ff"></div>
<div class="d" style="left:1290px;top:808px;color:#fff">.table-striped tbody&gt;tr:nth-</div>
<div class="d" style="left:1290px;top:822px;color:#fff">child(odd)&gt;td, .table-striped tbody&gt;tr:nth-child(odd)&gt;th {</div>
<div class="d l" style="left:1561px;top:808px">passageencaisse:504</div>
<div class="b" style="left:1290px;top:840px;width:11px;height:11px;background:#e8e8e8;border:1px solid #aaa;border-radius:2px"></div>
<div class="b" style="left:1308px;top:839px;width:119px;height:14px;background:#3b94ff"></div>
<div class="sw" style="left:1428px;top:841px"></div>
<div class="b" style="left:1440px;top:839px;width:53px;height:14px;background:#3b94ff"></div>
<div class="d" style="left:1308px;top:838px;color:#fff;text-decoration:line-through;text-decoration-color:#222">background-color:</div>
<div class="d" style="left:1440px;top:838px;color:#fff;text-decoration:line-through;text-decoration-color:#222">#f5f5f5;</div>
<div class="b" style="left:1290px;top:853px;width:7px;height:14px;background:#3b94ff"></div>
<div class="d" style="left:1290px;top:852px;color:#fff">}</div>
<div class="ln" style="left:1286px;top:871px;width:402px"></div>
<div class="d" style="left:1290px;top:874px"><span style="color:#888">.table th,</span> .table td {</div>
<div class="d l" style="left:1561px;top:874px">passageencaisse:504</div>
<div class="d" style="left:1308px;top:890px"><span class="r">padding:</span></div><div class="ar" style="left:1362px;top:893px;border-top-width:4px;border-bottom-width:4px;border-left-width:6px"></div><div class="d" style="left:1373px;top:890px">8px;</div>
<div class="d" style="left:1308px;top:904px"><span class="r">line-height:</span> 1.8;</div>
<div class="d" style="left:1308px;top:918px"><span class="r">text-align:</span> left;</div>
<div class="d" style="left:1308px;top:932px"><span class="r">vertical-align:</span> top;</div>
<div class="d" style="left:1308px;top:946px"><span class="r">border-top:</span></div><div class="ar" style="left:1382px;top:949px;border-top-width:4px;border-bottom-width:4px;border-left-width:6px"></div><div class="d" style="left:1393px;top:946px">1px solid</div><div class="sw" style="left:1460px;top:949px"></div><div class="d" style="left:1473px;top:946px">#fff;</div>
<div class="d" style="left:1290px;top:961px">}</div>
<div class="ln" style="left:1286px;top:978px;width:402px"></div>
<div class="d" style="left:1290px;top:981px">.hikashop_checkout_cart td {</div>
<div class="d l" style="left:1488px;top:981px">style_custom.cs…1506685971:189</div>
<div class="d" style="left:1308px;top:997px;text-decoration:line-through"><span class="r">padding:</span></div><div class="ar" style="left:1362px;top:1001px;border-top-width:4px;border-bottom-width:4px;border-left-width:6px"></div><div class="d" style="left:1373px;top:997px;text-decoration:line-through">10px;</div>
<div class="d" style="left:1290px;top:1012px">}</div>
<div class="ln" style="left:1286px;top:1029px;width:402px"></div>
<div class="d" style="left:1290px;top:1033px">.hikashop_cart_product_name_v</div>
<div class="d l" style="left:1488px;top:1033px">style_custom.cs…1506685971:257</div>
<!-- styles scrollbar -->
<div class="sb" style="left:1688px;top:743px;width:17px;height:297px"></div>
<div class="tu" style="left:1692px;top:751px"></div>
<div class="b" style="left:1690px;top:760px;width:13px;height:53px;background:#c1c1c1"></div>
<div class="td" style="left:1692px;top:1029px"></div>
<div class="b" style="left:1705px;top:743px;width:1px;height:297px;background:#bbb"></div>
<!-- box model -->
<div class="b" style="left:1740px;top:785px;width:127px;height:104px;background:#ffecb9;border:1px solid #000"></div>
<div class="b" style="left:1752px;top:806px;width:103px;height:62px;background:#c5d69b;border:1px dashed #808080"></div>
<div class="b" style="left:1765px;top:827px;width:78px;height:20px;background:#89afc3;border:1px solid #808080"></div>
<div class="t bx" style="left:1749px;top:787px">border</div><div class="t bx" style="left:1802px;top:787px">1</div>
<div class="t bx" style="left:1761px;top:808px">padding</div><div class="t bx" style="left:1802px;top:808px">8</div>
<div class="t bx" style="left:1782px;top:828px">268 × 161</div>
<div class="t bx" style="left:1746px;top:828px">–</div><div class="t bx" style="left:1756px;top:828px">8</div><div class="t bx" style="left:1848px;top:828px">8</div><div class="t bx" style="left:1859px;top:828px">–</div>
<div class="t bx" style="left:1802px;top:849px">8</div><div class="t bx" style="left:1802px;top:871px">–</div>
<div class="ln" style="left:1706px;top:933px;width:197px;background:#ccc"></div>
<div class="t" style="left:1710px;top:938px;color:#666">Filter</div>
<div class="b" style="left:1834px;top:942px;width:9px;height:9px;background:#eee;border:1px solid #aaa;border-radius:2px"></div>
<div class="t" style="left:1852px;top:938px;color:#666">Show all</div>
<div class="ln" style="left:1706px;top:960px;width:197px"></div>
<div class="b" style="left:1706px;top:963px;width:197px;height:16px;background:#f5f5f5"></div>
<div class="b" style="left:1706px;top:995px;width:197px;height:16px;background:#f5f5f5"></div>
<div class="b" style="left:1706px;top:1027px;width:197px;height:13px;background:#f5f5f5"></div>
<div class="d r" style="left:1722px;top:964px">background-co…</div>
<div class="sw" style="left:1844px;top:966px;background:linear-gradient(135deg,#ccc 50%,#fff 50%)"></div><div class="d" style="left:1856px;top:964px;width:47px;overflow:hidden">rgba(0,</div>
<div class="ar" style="left:1711px;top:984px"></div><div class="d r" style="left:1722px;top:980px">border-collap…</div><div class="d" style="left:1843px;top:980px">collapse</div>
<div class="ar" style="left:1711px;top:1000px"></div><div class="d r" style="left:1722px;top:996px">border-top-co…</div>
<div class="sw" style="left:1844px;top:998px"></div><div class="d" style="left:1856px;top:996px;width:47px;overflow:hidden">rgb(255</div>
<div class="ar" style="left:1711px;top:1016px"></div><div class="d r" style="left:1722px;top:1012px">border-top-st…</div><div class="d" style="left:1843px;top:1012px">solid</div>
<div class="ar" style="left:1711px;top:1032px"></div><div class="d r" style="left:1722px;top:1028px">border-top-wi…</div><div class="d" style="left:1843px;top:1028px">1px</div>
<div class="sb" style="left:1903px;top:743px;width:17px;height:297px"></div>
<div class="tu" style="left:1908px;top:751px"></div>
<div class="b" style="left:1905px;top:760px;width:13px;height:109px;background:#c1c1c1"></div>
<div class="td" style="left:1908px;top:1029px"></div>
</body></html>
